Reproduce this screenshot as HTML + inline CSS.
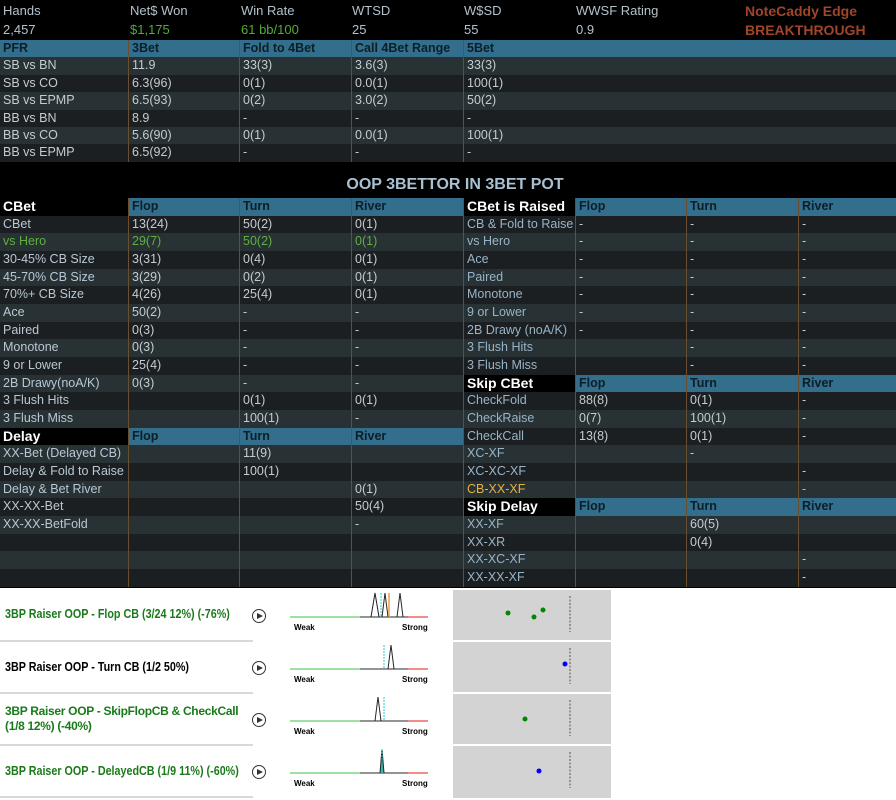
<!DOCTYPE html>
<html><head><meta charset="utf-8"><style>
*{box-sizing:border-box;margin:0;padding:0}
body{width:896px;height:800px;background:#000;font-family:"Liberation Sans",sans-serif;font-size:12.5px;color:#c4ccd0;position:relative;overflow:hidden}
.top{position:absolute;top:0;left:0;width:896px;height:40px;background:#000}
.top span{position:absolute;font-size:13px;color:#b4c2cc}
.r{display:flex;width:896px;overflow:hidden;white-space:nowrap;line-height:17px}
.r>div{padding-left:3px;border-left:1px solid #6b4e30;overflow:hidden}
.r>div:first-child{border-left:none}
.w0{width:128px}.w1{width:111px}.w2{width:112px}.w3{width:112px}.w4{width:112px}.w5{width:111px}.w6{width:112px}.w7{width:98px}
.d{background:#1b1f21}.l{background:#283134}
.h{background:#336f8c;color:#0c1e28;font-weight:bold}
.bk{background:#000!important;color:#fff!important;font-weight:bold;font-size:14px}
.hb{background:#336f8c!important;color:#0c1e28;font-weight:bold}
.lb{color:#b8c8d4}.rb{color:#98b4c8}
.g{color:#5fb040!important}.o{color:#e8b040!important}
.t1 .r{height:17.4px}
.t2 .r{height:17.68px}
.bot{position:absolute;top:588px;left:0;width:896px;height:212px;background:#fff}
.it{position:absolute;left:0;width:253px;border-bottom:2px solid #d8d8d8;color:#1a7a1a;font-weight:bold;font-size:12.5px;display:flex;align-items:center;padding-left:5px;white-space:nowrap}
.it span{display:inline-block;transform:scaleX(0.86);transform-origin:left center}
.pl{position:absolute;left:252px;width:14px;height:14px;border:1.5px solid #333;border-radius:50%}
.pl:after{content:"";position:absolute;left:4px;top:2.5px;border-left:6px solid #333;border-top:3.5px solid transparent;border-bottom:3.5px solid transparent}
.gb{position:absolute;left:453px;width:158px;background:#d3d3d3}
</style></head><body>
<div class="top">
<span style="left:3px;top:3px">Hands</span><span style="left:130px;top:3px">Net$ Won</span><span style="left:241px;top:3px">Win Rate</span><span style="left:352px;top:3px">WTSD</span><span style="left:464px;top:3px">W$SD</span><span style="left:576px;top:3px">WWSF Rating</span>
<span style="left:745px;top:3px;color:#a0442a;font-weight:bold;font-size:14px">NoteCaddy Edge</span>
<span style="left:3px;top:22px">2,457</span><span style="left:130px;top:22px;color:#4fae30">$1,175</span><span style="left:241px;top:22px;color:#4fae30">61 bb/100</span><span style="left:352px;top:22px">25</span><span style="left:464px;top:22px">55</span><span style="left:576px;top:22px">0.9</span>
<span style="left:745px;top:22px;color:#a0442a;font-weight:bold;font-size:14px">BREAKTHROUGH</span>
</div>
<div class="t1" style="position:absolute;top:40px;left:0">
<div class="r h"><div class="w0">PFR</div><div class="w1">3Bet</div><div class="w2">Fold to 4Bet</div><div class="w3">Call 4Bet Range</div><div class="w4">5Bet</div><div style="flex:1;border:none"></div></div>
<div class="r l"><div class="w0">SB vs BN</div><div class="w1">11.9</div><div class="w2">33(3)</div><div class="w3">3.6(3)</div><div class="w4">33(3)</div><div style="flex:1;border:none"></div></div>
<div class="r d"><div class="w0">SB vs CO</div><div class="w1">6.3(96)</div><div class="w2">0(1)</div><div class="w3">0.0(1)</div><div class="w4">100(1)</div><div style="flex:1;border:none"></div></div>
<div class="r l"><div class="w0">SB vs EPMP</div><div class="w1">6.5(93)</div><div class="w2">0(2)</div><div class="w3">3.0(2)</div><div class="w4">50(2)</div><div style="flex:1;border:none"></div></div>
<div class="r d"><div class="w0">BB vs BN</div><div class="w1">8.9</div><div class="w2">-</div><div class="w3">-</div><div class="w4">-</div><div style="flex:1;border:none"></div></div>
<div class="r l"><div class="w0">BB vs CO</div><div class="w1">5.6(90)</div><div class="w2">0(1)</div><div class="w3">0.0(1)</div><div class="w4">100(1)</div><div style="flex:1;border:none"></div></div>
<div class="r d"><div class="w0">BB vs EPMP</div><div class="w1">6.5(92)</div><div class="w2">-</div><div class="w3">-</div><div class="w4">-</div><div style="flex:1;border:none"></div></div>
</div>
<div style="position:absolute;top:176px;left:0;width:910px;text-align:center;font-weight:bold;font-size:16px;color:#a8c0d0">OOP 3BETTOR IN 3BET POT</div>
<div class="t2" style="position:absolute;top:198px;left:0">
<div class="r"><div class="w0 bk">CBet</div><div class="w1 hb">Flop</div><div class="w2 hb">Turn</div><div class="w3 hb">River</div><div class="w4 bk">CBet is Raised</div><div class="w5 hb">Flop</div><div class="w6 hb">Turn</div><div class="w7 hb">River</div></div>
<div class="r d"><div class="w0 lb">CBet</div><div class="w1">13(24)</div><div class="w2">50(2)</div><div class="w3">0(1)</div><div class="w4 rb">CB &amp; Fold to Raise</div><div class="w5">-</div><div class="w6">-</div><div class="w7">-</div></div>
<div class="r l"><div class="w0 g">vs Hero</div><div class="w1 g">29(7)</div><div class="w2 g">50(2)</div><div class="w3 g">0(1)</div><div class="w4 rb">vs Hero</div><div class="w5">-</div><div class="w6">-</div><div class="w7">-</div></div>
<div class="r d"><div class="w0 lb">30-45% CB Size</div><div class="w1">3(31)</div><div class="w2">0(4)</div><div class="w3">0(1)</div><div class="w4 rb">Ace</div><div class="w5">-</div><div class="w6">-</div><div class="w7">-</div></div>
<div class="r l"><div class="w0 lb">45-70% CB Size</div><div class="w1">3(29)</div><div class="w2">0(2)</div><div class="w3">0(1)</div><div class="w4 rb">Paired</div><div class="w5">-</div><div class="w6">-</div><div class="w7">-</div></div>
<div class="r d"><div class="w0 lb">70%+ CB Size</div><div class="w1">4(26)</div><div class="w2">25(4)</div><div class="w3">0(1)</div><div class="w4 rb">Monotone</div><div class="w5">-</div><div class="w6">-</div><div class="w7">-</div></div>
<div class="r l"><div class="w0 lb">Ace</div><div class="w1">50(2)</div><div class="w2">-</div><div class="w3">-</div><div class="w4 rb">9 or Lower</div><div class="w5">-</div><div class="w6">-</div><div class="w7">-</div></div>
<div class="r d"><div class="w0 lb">Paired</div><div class="w1">0(3)</div><div class="w2">-</div><div class="w3">-</div><div class="w4 rb">2B Drawy (noA/K)</div><div class="w5">-</div><div class="w6">-</div><div class="w7">-</div></div>
<div class="r l"><div class="w0 lb">Monotone</div><div class="w1">0(3)</div><div class="w2">-</div><div class="w3">-</div><div class="w4 rb">3 Flush Hits</div><div class="w5"></div><div class="w6">-</div><div class="w7">-</div></div>
<div class="r d"><div class="w0 lb">9 or Lower</div><div class="w1">25(4)</div><div class="w2">-</div><div class="w3">-</div><div class="w4 rb">3 Flush Miss</div><div class="w5"></div><div class="w6">-</div><div class="w7">-</div></div>
<div class="r l"><div class="w0 lb">2B Drawy(noA/K)</div><div class="w1">0(3)</div><div class="w2">-</div><div class="w3">-</div><div class="w4 bk">Skip CBet</div><div class="w5 hb">Flop</div><div class="w6 hb">Turn</div><div class="w7 hb">River</div></div>
<div class="r d"><div class="w0 lb">3 Flush Hits</div><div class="w1"></div><div class="w2">0(1)</div><div class="w3">0(1)</div><div class="w4 rb">CheckFold</div><div class="w5">88(8)</div><div class="w6">0(1)</div><div class="w7">-</div></div>
<div class="r l"><div class="w0 lb">3 Flush Miss</div><div class="w1"></div><div class="w2">100(1)</div><div class="w3">-</div><div class="w4 rb">CheckRaise</div><div class="w5">0(7)</div><div class="w6">100(1)</div><div class="w7">-</div></div>
<div class="r d"><div class="w0 bk">Delay</div><div class="w1 hb">Flop</div><div class="w2 hb">Turn</div><div class="w3 hb">River</div><div class="w4 rb">CheckCall</div><div class="w5">13(8)</div><div class="w6">0(1)</div><div class="w7">-</div></div>
<div class="r l"><div class="w0 lb">XX-Bet (Delayed CB)</div><div class="w1"></div><div class="w2">11(9)</div><div class="w3"></div><div class="w4 rb">XC-XF</div><div class="w5"></div><div class="w6">-</div><div class="w7"></div></div>
<div class="r d"><div class="w0 lb">Delay &amp; Fold to Raise</div><div class="w1"></div><div class="w2">100(1)</div><div class="w3"></div><div class="w4 rb">XC-XC-XF</div><div class="w5"></div><div class="w6"></div><div class="w7">-</div></div>
<div class="r l"><div class="w0 lb">Delay &amp; Bet River</div><div class="w1"></div><div class="w2"></div><div class="w3">0(1)</div><div class="w4 o">CB-XX-XF</div><div class="w5"></div><div class="w6"></div><div class="w7 o">-</div></div>
<div class="r d"><div class="w0 lb">XX-XX-Bet</div><div class="w1"></div><div class="w2"></div><div class="w3">50(4)</div><div class="w4 bk">Skip Delay</div><div class="w5 hb">Flop</div><div class="w6 hb">Turn</div><div class="w7 hb">River</div></div>
<div class="r l"><div class="w0 lb">XX-XX-BetFold</div><div class="w1"></div><div class="w2"></div><div class="w3">-</div><div class="w4 rb">XX-XF</div><div class="w5"></div><div class="w6">60(5)</div><div class="w7"></div></div>
<div class="r d"><div class="w0"></div><div class="w1"></div><div class="w2"></div><div class="w3"></div><div class="w4 rb">XX-XR</div><div class="w5"></div><div class="w6">0(4)</div><div class="w7"></div></div>
<div class="r l"><div class="w0"></div><div class="w1"></div><div class="w2"></div><div class="w3"></div><div class="w4 rb">XX-XC-XF</div><div class="w5"></div><div class="w6"></div><div class="w7">-</div></div>
<div class="r d"><div class="w0"></div><div class="w1"></div><div class="w2"></div><div class="w3"></div><div class="w4 rb">XX-XX-XF</div><div class="w5"></div><div class="w6"></div><div class="w7">-</div></div>
</div>
<div class="bot">
<div class="it" style="top:0;height:54px"><span>3BP Raiser OOP - Flop CB (3/24 12%) (-76%)</span></div>
<div class="it" style="top:54px;height:52px;color:#000"><span>3BP Raiser OOP - Turn CB (1/2 50%)</span></div>
<div class="it" style="top:106px;height:52px;line-height:15px;white-space:normal;font-size:12px;padding-right:4px;letter-spacing:-0.3px">3BP Raiser OOP - SkipFlopCB &amp; CheckCall (1/8 12%) (-40%)</div>
<div class="it" style="top:158px;height:52px"><span>3BP Raiser OOP - DelayedCB (1/9 11%) (-60%)</span></div>
<div class="pl" style="top:21px"></div><div class="pl" style="top:73px"></div><div class="pl" style="top:125px"></div><div class="pl" style="top:177px"></div>
<svg style="position:absolute;left:288px;top:0" width="146" height="210" font-family="Liberation Sans" font-size="8" font-weight="bold">
<g id="base">
<line x1="2" y1="29" x2="72" y2="29" stroke="#6c6" stroke-width="1.2"/><line x1="72" y1="29" x2="120" y2="29" stroke="#555" stroke-width="1.2"/><line x1="120" y1="29" x2="140" y2="29" stroke="#e44" stroke-width="1.2"/>
<text x="6" y="42">Weak</text><text x="114" y="42">Strong</text></g>
<polyline points="83,29 87,5 91,29" fill="none" stroke="#222"/><polyline points="94,29 97,5 100,29" fill="none" stroke="#222"/><polyline points="109,29 112,5 115,29" fill="none" stroke="#222"/>
<line x1="93" y1="5" x2="93" y2="29" stroke="#2cc" stroke-dasharray="2,1"/><line x1="101" y1="5" x2="101" y2="29" stroke="#e8a040" stroke-width="1.5"/>
<g transform="translate(0,52)"><use href="#base"/><polyline points="100,29 103,5 106,29" fill="none" stroke="#222"/><line x1="96" y1="5" x2="96" y2="29" stroke="#2cc" stroke-dasharray="2,1"/></g>
<g transform="translate(0,104)"><use href="#base"/><polyline points="87,29 90,5 93,29" fill="none" stroke="#222"/><line x1="96" y1="5" x2="96" y2="29" stroke="#2cc" stroke-dasharray="2,1"/></g>
<g transform="translate(0,156)"><use href="#base"/><polyline points="92,29 94,5 96,29" fill="#4aa" stroke="#222"/><line x1="94" y1="5" x2="94" y2="29" stroke="#2cc" stroke-dasharray="2,1"/></g>
</svg>
<div class="gb" style="top:2px;height:50px"></div><div class="gb" style="top:54px;height:50px"></div><div class="gb" style="top:106px;height:50px"></div><div class="gb" style="top:158px;height:52px"></div>
<svg style="position:absolute;left:453px;top:0" width="158" height="212">
<g stroke="#555" stroke-dasharray="2,1.5"><line x1="117" y1="8" x2="117" y2="44"/><line x1="117" y1="60" x2="117" y2="96"/><line x1="117" y1="112" x2="117" y2="148"/><line x1="117" y1="164" x2="117" y2="200"/></g>
<circle cx="55" cy="25" r="2.5" fill="#080"/><circle cx="81" cy="29" r="2.5" fill="#080"/><circle cx="90" cy="22" r="2.5" fill="#080"/>
<circle cx="112" cy="76" r="2.5" fill="#00f"/><circle cx="72" cy="131" r="2.5" fill="#080"/><circle cx="86" cy="183" r="2.5" fill="#00f"/>
</svg>
</div>
</body></html>
